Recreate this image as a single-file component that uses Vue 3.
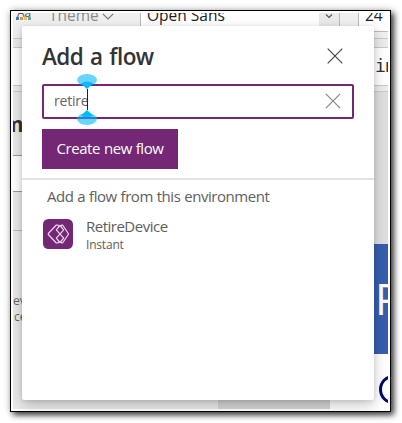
<script setup>
const glyphs = ['#3c78b8', '#e88b3c', '#e8c078', '#69aa8e']
</script>

<template>
  <main class="page">
    <div class="frame">
      <div class="studio">
        <header class="toolbar">
          <div class="theme">
            <div class="theme-icon">
              <b>Aa</b>
              <span class="swatches"><i v-for="c in glyphs" :key="c" :style="{ background: c }"></i></span>
            </div>
            <span class="theme-name">Theme</span>
            <svg class="theme-chevron" width="12" height="7" viewBox="0 0 12 7"><path d="M.8.8 6 6 11.200.8" /></svg>
          </div>
          <div class="font-box"><span>Open Sans</span></div>
          <div class="font-arrow"><svg width="8" height="5" viewBox="0 0 8 5"><path d="M1 .5 4 3.500 7 .5" /></svg></div>
          <div class="tool-gap"></div>
          <div class="size-box"><span>24</span></div>
        </header>
        <div class="band top-band"></div>
        <div class="formula"><code>in</code></div>
        <div class="band"></div>
        <div class="workspace">
          <aside class="tree">
            <div class="tree-head"><strong>m</strong></div>
            <div class="tree-search"></div>
            <div class="tree-row"></div>
            <div class="tree-body"><span>ev</span><span>ce</span></div>
          </aside>
          <div class="canvas"></div>
          <div class="preview">
            <div class="preview-space"></div>
            <div class="preview-title"><span>P</span></div>
            <div class="preview-body"><i class="ring"></i></div>
          </div>
        </div>
      </div>

      <section class="dialog">
        <div class="dialog-head">
          <h1>Add a flow</h1>
          <svg class="close" width="16" height="16" viewBox="0 0 16 16"><path d="m.7.7 14.600 14.600M15.300.7.7 15.300" /></svg>
        </div>
        <div class="search">
          <span class="query">retire</span>
          <svg class="clear" width="16" height="16" viewBox="0 0 16 16"><path d="m.9.9 14.200 14.200M15.100.9.9 15.100" /></svg>
          <svg class="caret" width="20" height="52" viewBox="0 0 20 52">
            <path class="stem" d="M10.500 15v21" />
            <ellipse cx="10" cy="6" rx="10" ry="6" />
            <ellipse cx="10" cy="45" rx="10" ry="6" />
            <path class="tip" d="M4 9.500Q10 5.500 16 9.500L10 15ZM4 41.500 10 36 16 41.500Q10 45 4 41.500Z" />
          </svg>
        </div>
        <button class="create"><span>Create new flow</span></button>
        <div class="divider"></div>
        <h2><span>Add a flow from this environment</span></h2>
        <div class="flow">
          <svg class="flow-icon" width="30" height="30" viewBox="0 0 30 30">
            <rect width="30" height="30" rx="5.500" />
            <path d="M16 7.300 14.800 6h-1.500L5.300 14.500v1l8 8.500h1.500l1.200-1.300M18 7l.9-1h.7l5.700 8.500v1L19.600 24h-.7l-.9-1M13.300 10.800 17 6.500l3.700 4.300-7.400 8.400 3.700 4.300 3.700-4.300-7.400-8.400Z" />
          </svg>
          <div class="flow-text">
            <span class="flow-name">RetireDevice</span>
            <span class="flow-type">Instant</span>
          </div>
        </div>
      </section>
    </div>
  </main>
</template>

<style>
body { background: #fff; overflow: hidden; }
</style>

<style scoped>
* { box-sizing: border-box; }
.page { height: 423px; padding: 10px; font-family: "Open Sans", "Noto Sans", sans-serif; }
.frame { position: relative; width: 381px; height: 402px; padding: 2px; border: 1px solid #000; background: #fff; box-shadow: 3px 3px 6px rgba(0,0,0,.75), 0 0 8px rgba(0,0,0,.2); }
.studio { height: 396px; width: 375px; overflow: hidden; display: flex; flex-direction: column; background: #ebeae9; }
.toolbar { display: flex; height: 25px; flex: none; background: #f0f0f0; }
.theme { width: 128px; display: flex; gap: 17px; padding-left: 3px; border-right: 1px solid #bbb; }
.theme-icon { width: 16px; height: 8px; overflow: hidden; display: flex; flex-direction: column; justify-content: flex-end; font-size: 12px; line-height: 5px; color: #555; }
.theme-icon b { height: 4px; padding-left: 1px; line-height: 0; margin-top: -3px; font-weight: 400; }
.swatches { display: flex; gap: 1px; height: 4px; flex: none; background: #f0f0f0; z-index: 1; }
.swatches i { width: 3px; height: 3px; }
.theme-name { color: #8a8a8a; font-size: 15.500px; line-height: 20px; margin-top: -8px; height: 20px; }
.theme-chevron { margin: 0 0 0 -14px; fill: none; stroke: #777; stroke-width: 1.200; }
.font-box { width: 178px; background: #fff; overflow: hidden; color: #222; padding-left: 6px; font-size: 15.500px; line-height: 20px; }
.font-box span, .size-box span { display: block; margin-top: -8px; }
.font-arrow { width: 21px; padding: 0 0 0 6px; background: #eaeaea; border-right: 1px solid #bbb; line-height: 0; }
.font-arrow svg { fill: none; stroke: #555; stroke-width: 1.200; }
.tool-gap { width: 19px; border-right: 1px solid #bbb; }
.size-box { flex: 1; height: 19px; overflow: hidden; background: #fff; border-bottom: 1px solid #bbb; color: #222; padding-left: 6px; font-size: 15.500px; line-height: 20px; }
.band { height: 7px; flex: none; background: #ececec; border-top: 1px solid #c9c9c9; border-bottom: 1px solid #c9c9c9; }
.top-band { height: 10px; }
.formula { height: 37px; flex: none; background: #fff; display: flex; justify-content: flex-end; }
.formula code { width: 13px; overflow: hidden; font: 18px/36px "DejaVu Sans Mono", monospace; color: #333; letter-spacing: -1px; }
.workspace { flex: 1; display: flex; min-height: 0; }
.tree { width: 205px; flex: none; display: flex; flex-direction: column; background: #ebeae9; }
.tree-head { height: 64px; border-bottom: 1px solid #999; font-size: 21px; line-height: 64px; color: #333; }
.tree-head strong { display: block; margin-left: -10px; font-weight: 700; }
.tree-search { height: 36px; background: #fff; border-bottom: 1px solid #999; }
.tree-row { height: 39px; border-bottom: 1px solid #bbb; }
.tree-body { display: flex; flex-direction: column; padding-top: 62px; font-size: 12px; line-height: 16px; color: #666; }
.tree-body span + span { margin-left: 1px; }
.canvas { width: 112px; flex: none; background: #d5d5d5; }
.preview { width: 58px; flex: none; display: flex; flex-direction: column; background: #fff; }
.preview-space { height: 152px; flex: none; background: #dfdfdf; }
.preview-title { height: 110px; flex: none; background: #375fad; color: #fff; font-size: 43px; line-height: 110px; padding-left: 45px; overflow: hidden; }
.preview-body { flex: 1; padding: 21px 0 0 49px; overflow: hidden; }
.ring { display: block; width: 28px; height: 29px; border: 3px solid #000b69; border-radius: 50%; }
.dialog { position: absolute; left: 11px; top: 15px; width: 352px; height: 374px; background: #fff; border-radius: 2px; box-shadow: 0 5px 14px rgba(0,0,0,.22), 0 1px 4px rgba(0,0,0,.1); }
.dialog-head { height: 58px; padding: 14px 31px 0 20px; display: flex; justify-content: space-between; }
h1 { margin: 0; font-size: 22.500px; line-height: 34px; font-weight: 600; color: #333; white-space: nowrap; letter-spacing: -.55px; word-spacing: 1.500px; }
.close, .clear { fill: none; stroke: #444; stroke-width: 1.200; }
.close { margin-top: 8px; }
.search { position: relative; margin: 0 20px; height: 35px; width: 312px; border: 2px solid #742774; border-radius: 2px; display: flex; align-items: center; justify-content: space-between; padding: 0 11px 2px 10px; }
.query { color: #666; font-size: 14px; letter-spacing: -.2px; }
.clear { stroke: #888; }
.caret { position: absolute; left: 33px; top: -12px; }
.caret ellipse { fill: #00b9ff; opacity: .6; }
.caret .tip { fill: #00b9ff; }
.caret .stem { stroke: #222; stroke-width: 1; }
.create { display: flex; align-items: center; justify-content: center; margin: 10px 0 0 20px; width: 136px; height: 40px; padding: 0 0 2px; border: 0; background: #742774; color: #fff; font: 15px "Open Sans", sans-serif; white-space: nowrap; letter-spacing: -.45px; word-spacing: .5px; }
.divider { height: 2px; margin-top: 9px; background: #e3e3e3; }
h2 { margin: 6px 0 0 25px; color: #605e5c; font-size: 15px; line-height: 20px; font-weight: 400; letter-spacing: -.45px; word-spacing: .4px; white-space: nowrap; }
.flow { display: flex; gap: 13px; padding-left: 21px; margin-top: 11px; }
.flow-icon { margin-top: 2px; }
.flow-icon rect { fill: #742774; }
.flow-icon path { fill: none; stroke: #ead8ea; stroke-width: 1.200; stroke-linejoin: round; }
.flow-text { display: flex; flex-direction: column; color: #605e5c; }
.flow-name { font-size: 15px; line-height: 19px; letter-spacing: -.5px; }
.flow-type { font-size: 12px; line-height: 18px; letter-spacing: -.2px; }
</style>
